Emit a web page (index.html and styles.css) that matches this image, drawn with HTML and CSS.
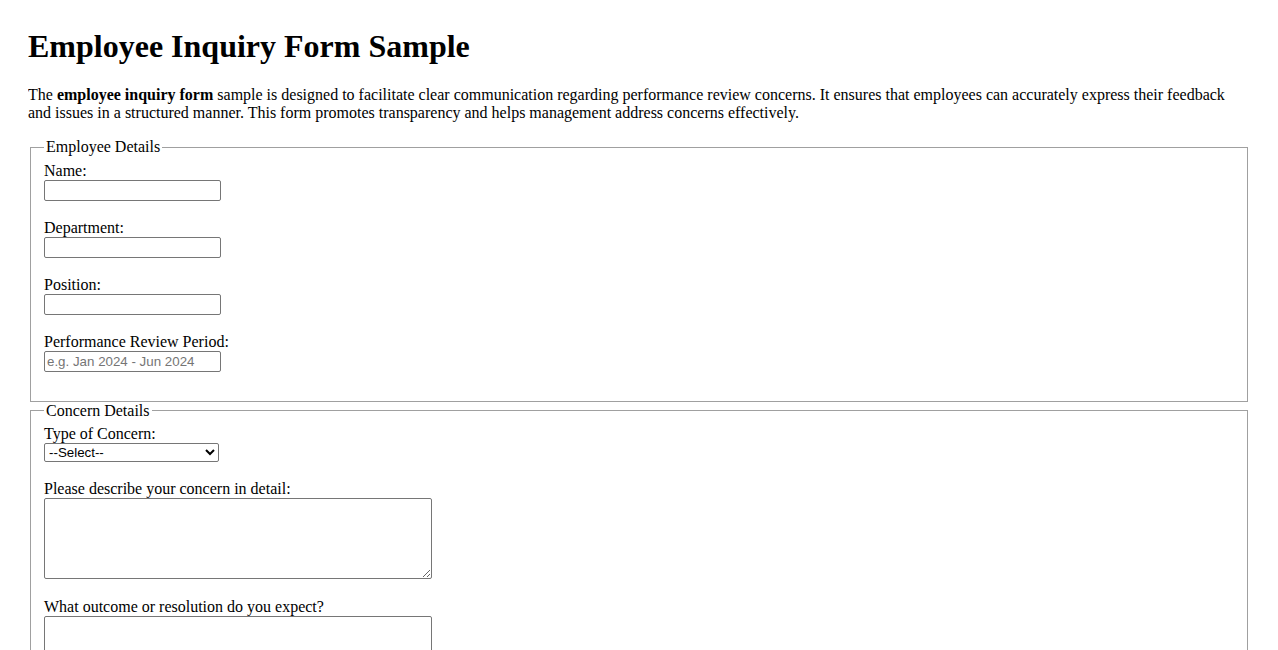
FILE: index.html
```html
<!DOCTYPE html>
<html lang="en">
<head>
<meta charset="utf-8">
<title>Employee Inquiry Form Sample</title>
<link rel="stylesheet" href="styles.css">
</head>
<body>
<h1>Employee Inquiry Form Sample</h1>
<p>The <strong>employee inquiry form</strong> sample is designed to facilitate clear communication regarding performance review concerns. It ensures that employees can accurately express their feedback and issues in a structured manner. This form promotes transparency and helps management address concerns effectively.</p>
<form>
<fieldset>
<legend>Employee Details</legend>
<label for="name">Name:</label><br>
<input class="field" type="text" id="name"><br><br>
<label for="dept">Department:</label><br>
<input class="field" type="text" id="dept"><br><br>
<label for="pos">Position:</label><br>
<input class="field" type="text" id="pos"><br><br>
<label for="period">Performance Review Period:</label><br>
<input class="field" type="text" id="period" placeholder="e.g. Jan 2024 - Jun 2024"><br><br>
</fieldset>
<fieldset>
<legend>Concern Details</legend>
<label for="type">Type of Concern:</label><br>
<select class="choice" id="type">
<option>--Select--</option>
<option>Rating Disagreement</option>
<option>Feedback Clarity</option>
<option>Process Issue</option>
<option>Other</option>
</select><br><br>
<label for="desc">Please describe your concern in detail:</label><br>
<textarea class="area" id="desc"></textarea><br><br>
<label for="outcome">What outcome or resolution do you expect?</label><br>
<textarea class="area" id="outcome"></textarea><br><br>
</fieldset>
</form>
</body>
</html>
```
FILE: styles.css
```css
body {
  margin: 28px;
  font-family: "Liberation Serif", "Times New Roman", serif;
  font-size: 16px;
  color: #000;
  background: #fff;
}
h1 {
  font-size: 32px;
  font-weight: bold;
  margin: 0 0 21.44px;
}
p {
  margin: 16px 0;
}
form {
  margin: 0;
}
fieldset {
  margin: 0 2px;
  padding: 5.6px 13px 10.6px;
  border: 1px solid #a0a0a0;
}
legend {
  padding: 0 2px;
}
.field {
  box-sizing: border-box;
  width: 177px;
  height: 21px;
  font-family: "Liberation Sans", Arial, sans-serif;
  font-size: 13.33px;
  padding: 1px 2px;
  border: 1px solid #767676;
  border-radius: 2px;
  margin: 0;
  background: #fff;
}
.field::placeholder {
  color: #757575;
}
.choice {
  box-sizing: border-box;
  width: 175px;
  height: 19px;
  font-family: "Liberation Sans", Arial, sans-serif;
  font-size: 13.33px;
  border: 1px solid #767676;
  border-radius: 2px;
  margin: 0;
  background-color: #fff;
  color: #000;
}
.area {
  box-sizing: border-box;
  width: 388px;
  height: 81px;
  border: 1px solid #767676;
  border-radius: 2px;
  margin: 0;
  background: #fff;
  vertical-align: text-bottom;
}
```
